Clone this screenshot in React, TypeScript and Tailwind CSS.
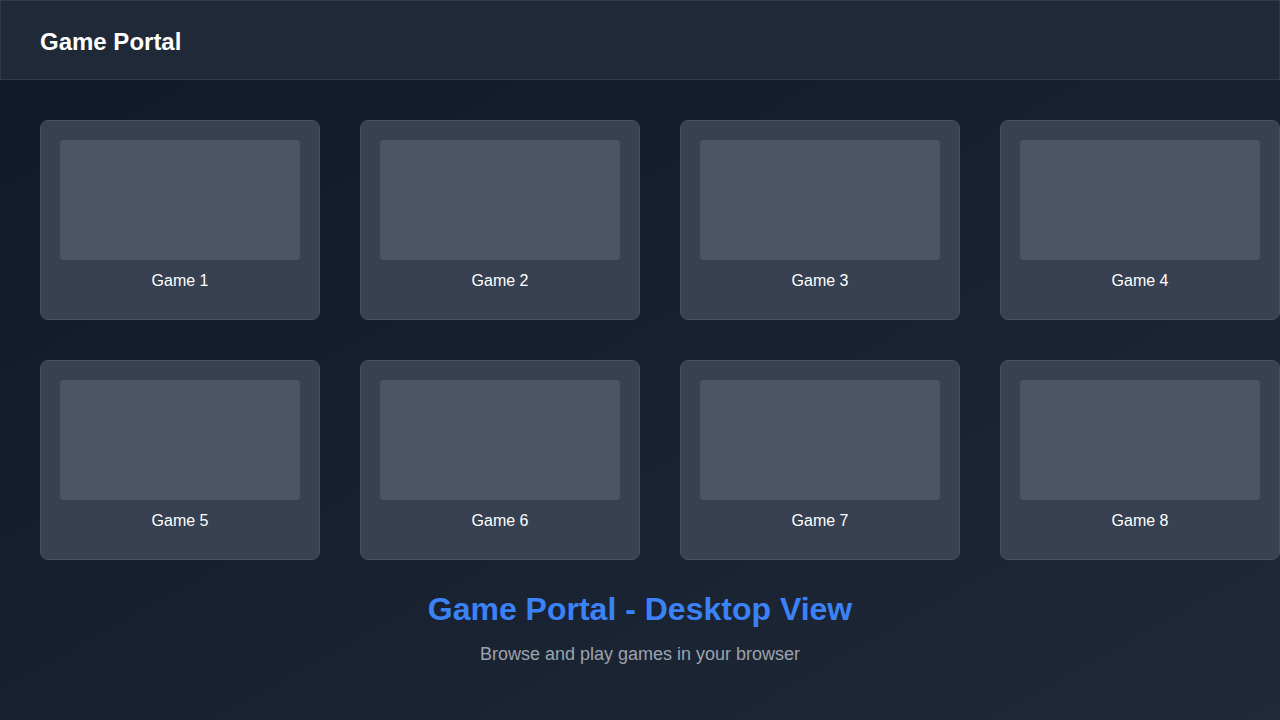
const games = Array.from({ length: 8 }, (_, i) => ({ id: i + 1, name: `Game ${i + 1}` }));

const GameCard = ({ name }: { name: string }) => (
  <div className="h-[200px] w-[280px] rounded-lg border border-[#475163] bg-[#374151] p-[19px]">
    <div className="h-[120px] rounded bg-[#4b5563]" />
    <p className="mt-[9px] text-center text-base leading-6 text-white">{name}</p>
  </div>
);

const App = () => {
  return (
    <div
      className="h-[720px] w-[1280px] overflow-hidden bg-linear-to-br from-[#111827] to-[#1f2937] text-white"
      style={{ fontFamily: '"Liberation Sans", Arial, sans-serif' }}
    >
      {/* Header */}
      <header className="flex h-20 items-center border border-[#2e3a4b] bg-[#1f2937] px-[39px] pt-1">
        <h1 className="text-2xl font-bold">Game Portal</h1>
      </header>

      <main className="pl-10 pt-10">
        <div className="grid w-[1240px] grid-cols-[repeat(4,280px)] gap-10">
          {games.map((g) => (
            <GameCard key={g.id} name={g.name} />
          ))}
        </div>

        <div className="-ml-10 text-center">
          <h2 className="mt-[29px] text-[32px] font-bold leading-10 text-[#3b82f6]">Game Portal - Desktop View</h2>
          <p className="mt-[11px] text-lg leading-7 text-[#9ca3af]">Browse and play games in your browser</p>
        </div>
      </main>
    </div>
  );
};

export default App;
